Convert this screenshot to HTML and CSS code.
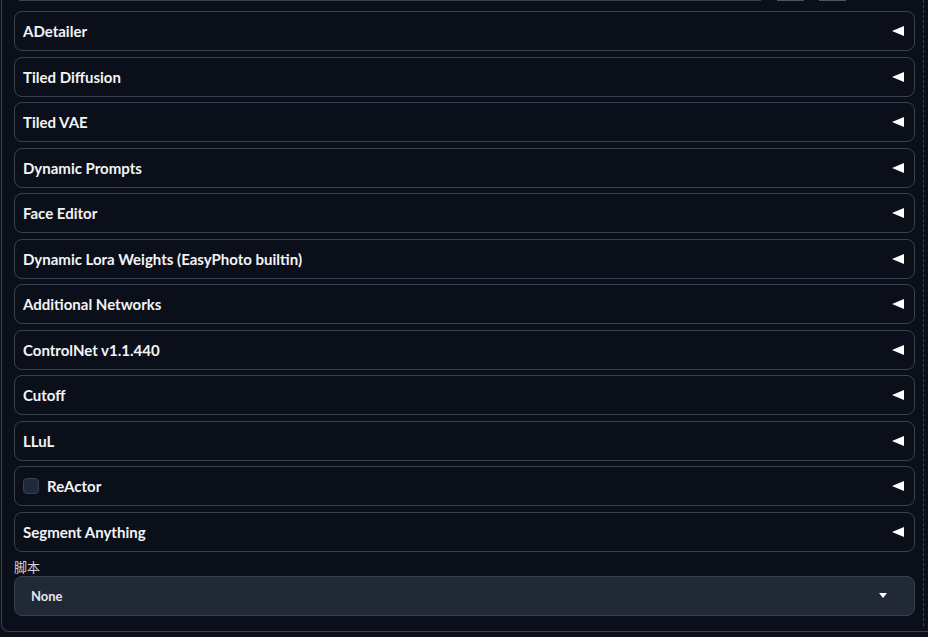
FILE: index.html
```html
<!DOCTYPE html>
<html>
<head>
<meta name="viewport" content="width=device-width, initial-scale=1">
<link rel="stylesheet" href="styles.css">
</head>
<body>

<div class="wrap">
  <div class="col">
    <div class="top-strip">
      <span class="strip-input"></span>
      <span class="strip-btn"></span>
      <span class="strip-btn"></span>
    </div>

    <div class="list">
      <div class="acc"><span class="acc-label">ADetailer</span><span class="tri"></span></div>
      <div class="acc"><span class="acc-label">Tiled Diffusion</span><span class="tri"></span></div>
      <div class="acc"><span class="acc-label">Tiled VAE</span><span class="tri"></span></div>
      <div class="acc"><span class="acc-label">Dynamic Prompts</span><span class="tri"></span></div>
      <div class="acc"><span class="acc-label">Face Editor</span><span class="tri"></span></div>
      <div class="acc"><span class="acc-label">Dynamic Lora Weights (EasyPhoto builtin)</span><span class="tri"></span></div>
      <div class="acc"><span class="acc-label">Additional Networks</span><span class="tri"></span></div>
      <div class="acc"><span class="acc-label">ControlNet v1.1.440</span><span class="tri"></span></div>
      <div class="acc"><span class="acc-label">Cutoff</span><span class="tri"></span></div>
      <div class="acc"><span class="acc-label">LLuL</span><span class="tri"></span></div>
      <div class="acc"><span class="check"></span><span class="acc-label">ReActor</span><span class="tri"></span></div>
      <div class="acc"><span class="acc-label">Segment Anything</span><span class="tri"></span></div>
    </div>

    <div class="field-label">脚本</div>
    <div class="select">
      <span class="select-value">None</span>
      <span class="caret"></span>
    </div>
  </div>
</div>

</body>
</html>
```

FILE: styles.css
```css
html {
  box-sizing: border-box;
}

*, *:before, *:after {
  box-sizing: inherit;
}

body {
  margin: 0;
  background-color: #0b0f19;
  color: #e5e7eb;
  font-family: Lato, "Noto Sans", Arial, sans-serif;
  overflow: hidden;
}

.wrap {
  margin-left: 1px;
  width: 960px;
  height: 632px;
  border-left: 1px solid #374151;
  border-bottom: 1px solid #374151;
  border-bottom-left-radius: 8px;
}

.col {
  width: 922px;
  height: 626px;
  padding: 0 8px 0 12px;
  border-right: 1px dashed #374151;
}

.top-strip {
  display: flex;
  height: 1px;
}

.strip-input {
  margin-left: 5px;
  width: 742px;
  background-color: #374151;
}

.strip-btn {
  margin-left: 16px;
  width: 27px;
  background-color: #4b5563;
}

.strip-btn + .strip-btn {
  margin-left: 15px;
}

.list {
  display: flex;
  flex-direction: column;
  gap: 5.5px;
  padding-top: 10px;
}

.acc {
  display: flex;
  align-items: center;
  height: 40px;
  padding: 0 10px 0 8px;
  border: 1px solid #374151;
  border-radius: 8px;
  background-color: #0b0f19;
}

.acc-label {
  flex: 1;
  font-size: 15px;
  font-weight: 700;
  color: #f3f4f6;
}

.tri {
  width: 0;
  height: 0;
  border-top: 5px solid transparent;
  border-bottom: 5px solid transparent;
  border-right: 12px solid #ffffff;
}

.check {
  width: 16px;
  height: 16px;
  margin-right: 8px;
  border: 1px solid #374151;
  border-radius: 4px;
  background-color: #1f2937;
}

.field-label {
  margin-top: 7px;
  font-family: "Noto Sans CJK SC", sans-serif;
  font-size: 13px;
  line-height: 16px;
  color: #d1d5db;
}

.select {
  display: flex;
  align-items: center;
  height: 40px;
  margin-top: 1px;
  padding: 0 27px 0 16px;
  border: 1px solid #374151;
  border-radius: 8px;
  background-color: #212836;
}

.select-value {
  flex: 1;
  font-size: 13px;
  font-weight: 700;
  color: #e5e7eb;
}

.caret {
  width: 0;
  height: 0;
  border-left: 4px solid transparent;
  border-right: 4px solid transparent;
  border-top: 5px solid #ffffff;
}
```
